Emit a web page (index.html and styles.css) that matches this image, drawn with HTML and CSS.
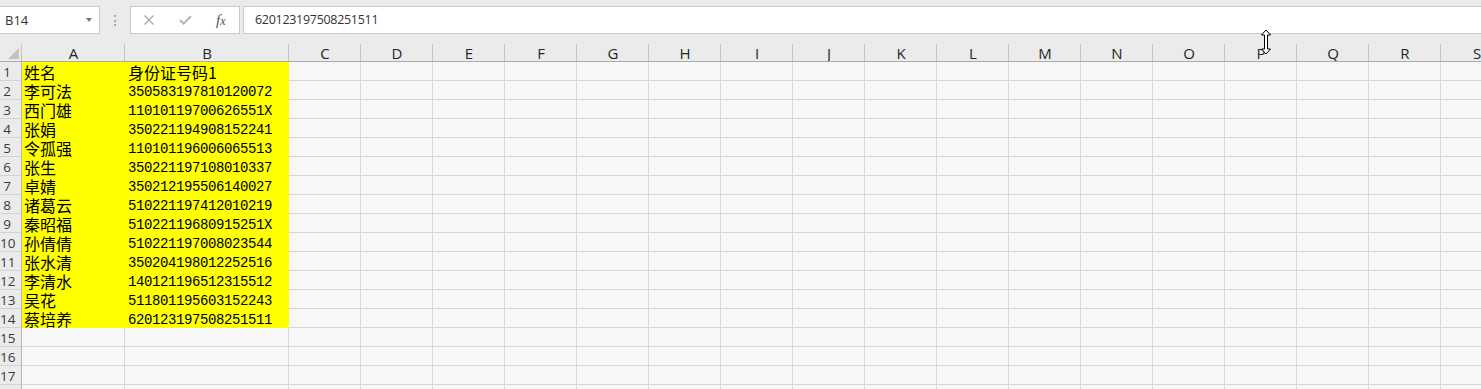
FILE: index.html
```html
<!DOCTYPE html>
<html lang="zh-CN">
<head>
  <meta charset="UTF-8">
  <title>身份证号码</title>
  <link rel="stylesheet" href="styles.css">
</head>
<body>
  <!-- 编辑栏 -->
  <div class="topbar">
    <div class="namebox"><span>B14</span><span class="caret"></span></div>
    <div class="grip"><i></i><i></i><i></i></div>
    <div class="fxbtns">
      <svg width="12" height="12" viewBox="0 0 12 12"><path d="M1.5 1.5L10.5 10.5M10.5 1.5L1.5 10.5" stroke="#a9a9a9" stroke-width="1.3"/></svg>
      <svg width="13" height="10" viewBox="0 0 13 10"><path d="M1 5L4.6 8.6L12 1.2" fill="none" stroke="#b5b5b5" stroke-width="2"/></svg>
      <span class="fx"><i>f</i><i class="sub">x</i></span>
    </div>
    <div class="formula">620123197508251511</div>
  </div>

  <!-- 表格 -->
  <div class="sheet">
    <div class="colhead">
      <div class="corner"><svg width="11" height="11" viewBox="0 0 11 11"><path d="M11 0V11H0Z" fill="#c2c2c2"/></svg></div>
      <div class="ch wa">A</div>
      <div class="ch wb">B</div>
      <div class="ch">C</div>
      <div class="ch">D</div>
      <div class="ch">E</div>
      <div class="ch">F</div>
      <div class="ch">G</div>
      <div class="ch">H</div>
      <div class="ch">I</div>
      <div class="ch">J</div>
      <div class="ch">K</div>
      <div class="ch">L</div>
      <div class="ch">M</div>
      <div class="ch">N</div>
      <div class="ch">O</div>
      <div class="ch">P</div>
      <div class="ch">Q</div>
      <div class="ch">R</div>
      <div class="ch">S</div>
    </div>

    <div class="row"><div class="rh">1</div><div class="cell a fill name">姓名</div><div class="cell b fill name">身份证号码1</div><div class="rest"></div></div>
    <div class="row"><div class="rh">2</div><div class="cell a fill name">李可法</div><div class="cell b fill id">350583197810120072</div><div class="rest"></div></div>
    <div class="row"><div class="rh">3</div><div class="cell a fill name">西门雄</div><div class="cell b fill id">11010119700626551X</div><div class="rest"></div></div>
    <div class="row"><div class="rh">4</div><div class="cell a fill name">张娟</div><div class="cell b fill id">350221194908152241</div><div class="rest"></div></div>
    <div class="row"><div class="rh">5</div><div class="cell a fill name">令孤强</div><div class="cell b fill id">110101196006065513</div><div class="rest"></div></div>
    <div class="row"><div class="rh">6</div><div class="cell a fill name">张生</div><div class="cell b fill id">350221197108010337</div><div class="rest"></div></div>
    <div class="row"><div class="rh">7</div><div class="cell a fill name">卓婧</div><div class="cell b fill id">350212195506140027</div><div class="rest"></div></div>
    <div class="row"><div class="rh">8</div><div class="cell a fill name">诸葛云</div><div class="cell b fill id">510221197412010219</div><div class="rest"></div></div>
    <div class="row"><div class="rh">9</div><div class="cell a fill name">秦昭福</div><div class="cell b fill id">51022119680915251X</div><div class="rest"></div></div>
    <div class="row"><div class="rh">10</div><div class="cell a fill name">孙倩倩</div><div class="cell b fill id">510221197008023544</div><div class="rest"></div></div>
    <div class="row"><div class="rh">11</div><div class="cell a fill name">张水清</div><div class="cell b fill id">350204198012252516</div><div class="rest"></div></div>
    <div class="row"><div class="rh">12</div><div class="cell a fill name">李清水</div><div class="cell b fill id">140121196512315512</div><div class="rest"></div></div>
    <div class="row"><div class="rh">13</div><div class="cell a fill name">吴花</div><div class="cell b fill id">511801195603152243</div><div class="rest"></div></div>
    <div class="row"><div class="rh">14</div><div class="cell a fill name">蔡培养</div><div class="cell b fill id">620123197508251511</div><div class="rest"></div></div>
    <div class="row"><div class="rh">15</div><div class="cell a"></div><div class="cell b"></div><div class="rest"></div></div>
    <div class="row"><div class="rh">16</div><div class="cell a"></div><div class="cell b"></div><div class="rest"></div></div>
    <div class="row"><div class="rh">17</div><div class="cell a"></div><div class="cell b"></div><div class="rest"></div></div>
    <div class="row"><div class="rh"></div><div class="cell a"></div><div class="cell b"></div><div class="rest"></div></div>
  </div>

  <!-- 鼠标指针 -->
  <svg class="pointer" width="14" height="26" viewBox="0 0 14 26">
    <path d="M7 1L11.5 6H8.5V20H11.5L7 25L2.5 20H5.5V6H2.5Z" fill="#fff" stroke="#000" stroke-width="1"/>
  </svg>
</body>
</html>
```

FILE: styles.css
```css
* {
  margin: 0;
  padding: 0;
  box-sizing: border-box;
}

body {
  width: 1481px;
  height: 389px;
  overflow: hidden;
  position: relative;
  background: #ebebeb;
  font-family: "Open Sans", "Liberation Sans", sans-serif;
  color: #333;
}

/* 编辑栏 */
.topbar {
  height: 40px;
  display: flex;
  align-items: flex-start;
  padding-top: 6px;
}

.namebox {
  width: 100px;
  height: 28px;
  flex: none;
  background: #fff;
  border: 1px solid #c8c8c8;
  border-left: 0;
  display: flex;
  align-items: center;
  justify-content: space-between;
  padding: 0 7px 0 5px;
  font-size: 13px;
}

.caret {
  border-left: 3.5px solid transparent;
  border-right: 3.5px solid transparent;
  border-top: 4px solid #777;
}

.grip {
  width: 30px;
  flex: none;
  display: flex;
  flex-direction: column;
  align-items: center;
  gap: 2.5px;
  padding-top: 9px;
}

.grip i {
  width: 2px;
  height: 2px;
  background: #a8a8a8;
}

.fxbtns {
  width: 110px;
  height: 28px;
  flex: none;
  margin-right: 3px;
  background: #fff;
  border: 1px solid #c8c8c8;
  display: flex;
  align-items: center;
  gap: 24px;
  padding-left: 12px;
}

.fx {
  font-family: "Liberation Serif", serif;
  font-size: 15px;
  color: #555;
}

.fx .sub {
  font-size: 12px;
}

.formula {
  flex: 1;
  height: 28px;
  background: #fff;
  border: 1px solid #c8c8c8;
  border-right: 0;
  padding-left: 11px;
  font-size: 12.5px;
  letter-spacing: -0.3px;
  line-height: 26px;
}

/* 列标题 */
.colhead {
  display: flex;
  height: 22px;
  border-bottom: 1px solid #ababab;
  overflow: hidden;
}

.corner {
  width: 22px;
  flex: none;
  display: flex;
  align-items: flex-end;
  justify-content: flex-end;
  padding: 0 3px 2px 0;
  background: linear-gradient(#c4c4c4, #c4c4c4) right bottom / 1px 17px no-repeat;
}

.ch {
  width: 72px;
  flex: none;
  text-align: center;
  font-size: 15px;
  line-height: 16px;
  padding-top: 5px;
  color: #262626;
  background: linear-gradient(#c4c4c4, #c4c4c4) right bottom / 1px 17px no-repeat;
}

.ch.wa {
  width: 103px;
}

.ch.wb {
  width: 164px;
}

/* 行 */
.row {
  display: flex;
  height: 19px;
}

.rh {
  width: 22px;
  flex: none;
  border-right: 1px solid #b4b4b4;
  border-bottom: 1px solid #d2d2d2;
  font-size: 13.5px;
  line-height: 17px;
  padding: 2px 7px 0 0;
  text-align: center;
  white-space: nowrap;
  color: #3a3a3a;
}

.cell {
  flex: none;
  background: #f7f7f7;
  border-right: 1px solid #d8d8d8;
  border-bottom: 1px solid #d8d8d8;
  white-space: nowrap;
  color: #000;
}

.cell.a {
  width: 103px;
  padding-left: 2px;
}

.cell.b {
  width: 164px;
  padding-left: 3px;
}

.cell.fill {
  background: #ffff00;
  border-color: #ffff00;
}

.name {
  font-family: "Noto Sans CJK SC", sans-serif;
  font-size: 16px;
  line-height: 18px;
  padding-top: 1px;
}

.id {
  font-family: "Liberation Mono", monospace;
  font-size: 14px;
  letter-spacing: -0.4px;
  line-height: 17px;
  padding-top: 3px;
}

.rest {
  flex: 1;
  border-bottom: 1px solid #d8d8d8;
  background-color: #f7f7f7;
  background-image: repeating-linear-gradient(to right, transparent 0 71px, #d8d8d8 71px 72px);
}

.pointer {
  position: absolute;
  left: 1259px;
  top: 29px;
}
```
